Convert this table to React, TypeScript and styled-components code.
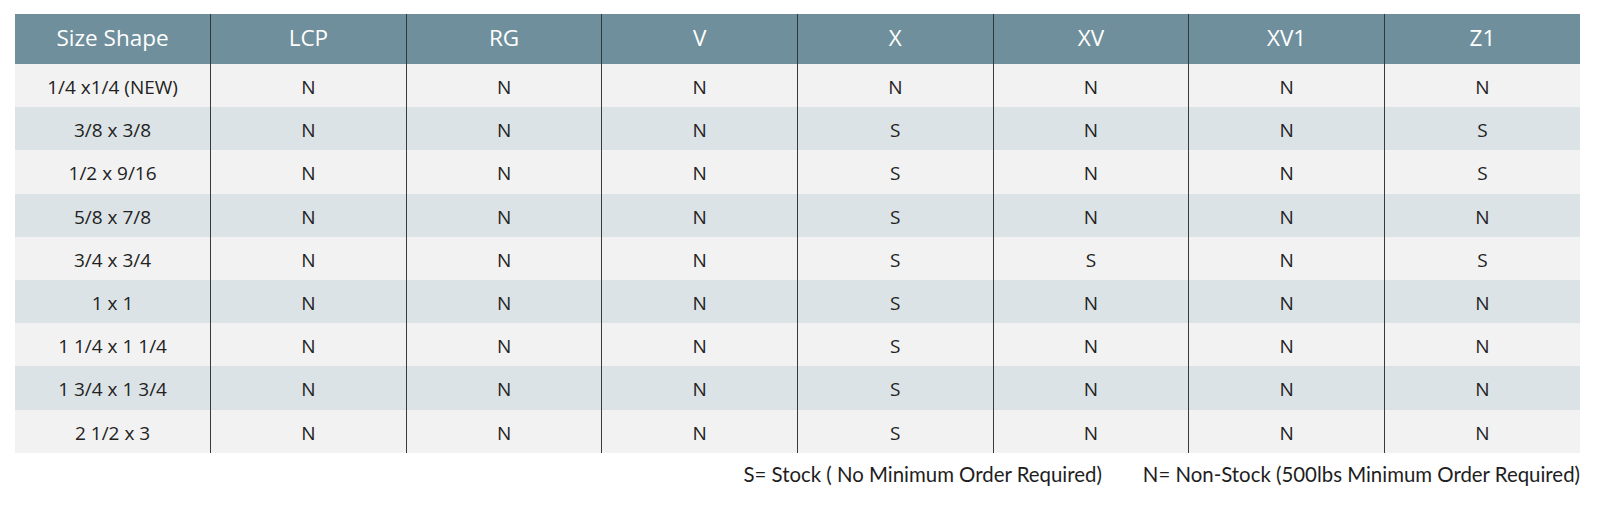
import React from "react";
import styled, { createGlobalStyle } from "styled-components";

const GlobalStyle = createGlobalStyle`
  html, body {
    margin: 0;
    padding: 0;
    background: #ffffff;
  }
  body {
    font-family: "Open Sans", "Noto Sans", sans-serif;
  }
`;

const Page = styled.div`
  padding: 14px 20px 0 15px;
  width: 1565px;
  box-sizing: content-box;
`;

const Table = styled.table`
  width: 1565px;
  border-collapse: collapse;
  table-layout: fixed;
`;

const HeadRow = styled.tr`
  background: #6e8f9b;
  height: 50px;
`;

const HeadCell = styled.th`
  font-family: "Open Sans", "Noto Sans", sans-serif;
  font-weight: 400;
  font-size: 22.5px;
  color: #ffffff;
  text-align: center;
  vertical-align: middle;
  padding: 0 0 3px 0;
  border-left: 1px solid #2f3a3f;
  &:first-child {
    border-left: none;
  }
`;

const BodyRow = styled.tr<{ $shade: boolean }>`
  background: ${(p) => (p.$shade ? "#dce3e6" : "#f2f2f2")};
  height: 43.2px;
`;

const Cell = styled.td`
  font-family: "Open Sans", "Noto Sans", sans-serif;
  font-weight: 400;
  font-size: 19px;
  color: #222222;
  text-align: center;
  vertical-align: middle;
  padding: 3px 0 0 0;
  border-left: 1px solid #3a3a3a;
  &:first-child {
    border-left: none;
  }
`;

const Legend = styled.div`
  display: flex;
  justify-content: flex-end;
  gap: 41px;
  padding-top: 9px;
  font-family: "Lato", "Liberation Sans", sans-serif;
  font-size: 20.4px;
  line-height: 24px;
  color: #1e1e1e;
`;

const LegendItem = styled.span`
  white-space: nowrap;
`;

const columns = ["Size Shape", "LCP", "RG", "V", "X", "XV", "XV1", "Z1"];

const rows: [string, string[]][] = [
  ["1/4 x1/4 (NEW)", ["N", "N", "N", "N", "N", "N", "N"]],
  ["3/8 x 3/8", ["N", "N", "N", "S", "N", "N", "S"]],
  ["1/2 x 9/16", ["N", "N", "N", "S", "N", "N", "S"]],
  ["5/8 x 7/8", ["N", "N", "N", "S", "N", "N", "N"]],
  ["3/4 x 3/4", ["N", "N", "N", "S", "S", "N", "S"]],
  ["1 x 1", ["N", "N", "N", "S", "N", "N", "N"]],
  ["1 1/4 x 1 1/4", ["N", "N", "N", "S", "N", "N", "N"]],
  ["1 3/4 x 1 3/4", ["N", "N", "N", "S", "N", "N", "N"]],
  ["2 1/2 x 3", ["N", "N", "N", "S", "N", "N", "N"]],
];

export default function App() {
  return (
    <>
      <GlobalStyle />
      <Page>
        <Table>
          <thead>
            <HeadRow>
              {columns.map((c) => (
                <HeadCell key={c}>{c}</HeadCell>
              ))}
            </HeadRow>
          </thead>
          <tbody>
            {rows.map(([size, vals], i) => (
              <BodyRow key={size} $shade={i % 2 === 1}>
                <Cell>{size}</Cell>
                {vals.map((v, j) => (
                  <Cell key={j}>{v}</Cell>
                ))}
              </BodyRow>
            ))}
          </tbody>
        </Table>
        <Legend>
          <LegendItem>S= Stock ( No Minimum Order Required)</LegendItem>
          <LegendItem>N= Non-Stock (500lbs Minimum Order Required)</LegendItem>
        </Legend>
      </Page>
    </>
  );
}
